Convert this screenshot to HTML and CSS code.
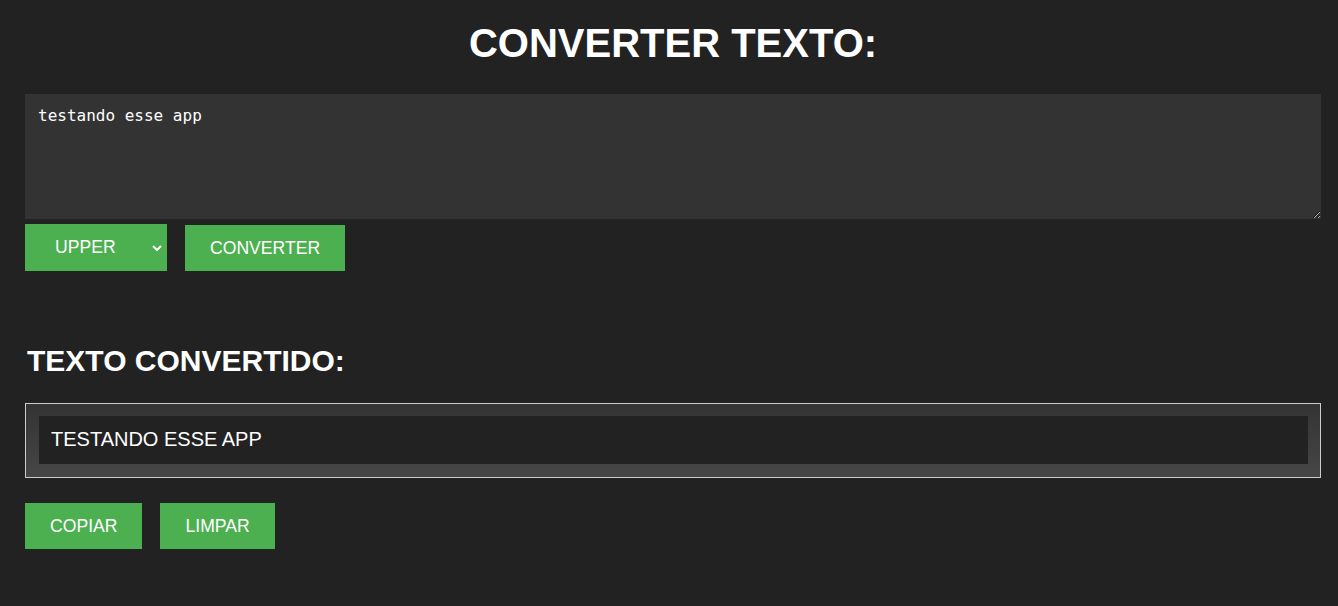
FILE: index.html
```html
<!DOCTYPE html>
<html lang="pt">
<head>
<meta charset="utf-8">
<title>Converter Texto</title>
<link rel="stylesheet" href="styles.css">
</head>
<body>
<main class="container">
  <h1 class="title">CONVERTER TEXTO:</h1>
  <textarea class="input">testando esse app</textarea>
  <div class="controls">
    <div class="select">
      <span>UPPER</span>
      <svg class="chevron" width="10" height="6" viewBox="0 0 10 6"><path d="M1 1 L5 5 L9 1" fill="none" stroke="#fff" stroke-width="2"/></svg>
    </div>
    <button class="btn">CONVERTER</button>
  </div>
  <h2 class="subtitle">TEXTO CONVERTIDO:</h2>
  <div class="output">
    <div class="output-inner">TESTANDO ESSE APP</div>
  </div>
  <div class="actions">
    <button class="btn">COPIAR</button>
    <button class="btn">LIMPAR</button>
  </div>
</main>
</body>
</html>
```
FILE: styles.css
```css
html, body {
  margin: 0;
  padding: 0;
  background: #222222;
}
body {
  font-family: "Liberation Sans", Arial, sans-serif;
  color: #ffffff;
}
.container {
  margin-left: 25px;
  width: 1296px;
  padding-top: 20px;
}
.title {
  margin: 0 0 28px 0;
  text-align: center;
  font-size: 40px;
  font-weight: bold;
  line-height: 46px;
}
.input {
  display: block;
  box-sizing: border-box;
  width: 1296px;
  height: 125px;
  margin: 0;
  padding: 12px 13px;
  border: none;
  background: #333333;
  color: #ffffff;
  font-family: "DejaVu Sans Mono", monospace;
  font-size: 16px;
  outline: none;
}
.controls {
  display: flex;
  align-items: flex-end;
  gap: 18px;
  margin-top: 5px;
}
.select {
  position: relative;
  box-sizing: border-box;
  width: 142px;
  height: 47px;
  padding-left: 30px;
  display: flex;
  align-items: center;
  background: #4caf50;
  font-size: 17.6px;
}
.chevron {
  position: absolute;
  right: 5px;
  top: 21px;
}
.btn {
  box-sizing: border-box;
  height: 46px;
  padding: 0 25px;
  border: none;
  background: #4caf50;
  color: #ffffff;
  font-family: "Liberation Sans", Arial, sans-serif;
  font-size: 17.6px;
}
.subtitle {
  margin: 72px 0 25px 2px;
  font-size: 30px;
  font-weight: bold;
  line-height: 35px;
}
.output {
  border: 1px solid #cccccc;
  padding: 12px 12px 13px 13px;
  background: linear-gradient(#343434, #464646);
}
.output-inner {
  box-sizing: border-box;
  height: 48px;
  padding: 12px;
  background: #222222;
  font-size: 20px;
  line-height: 23px;
}
.actions {
  display: flex;
  gap: 18px;
  margin-top: 25px;
}
```
